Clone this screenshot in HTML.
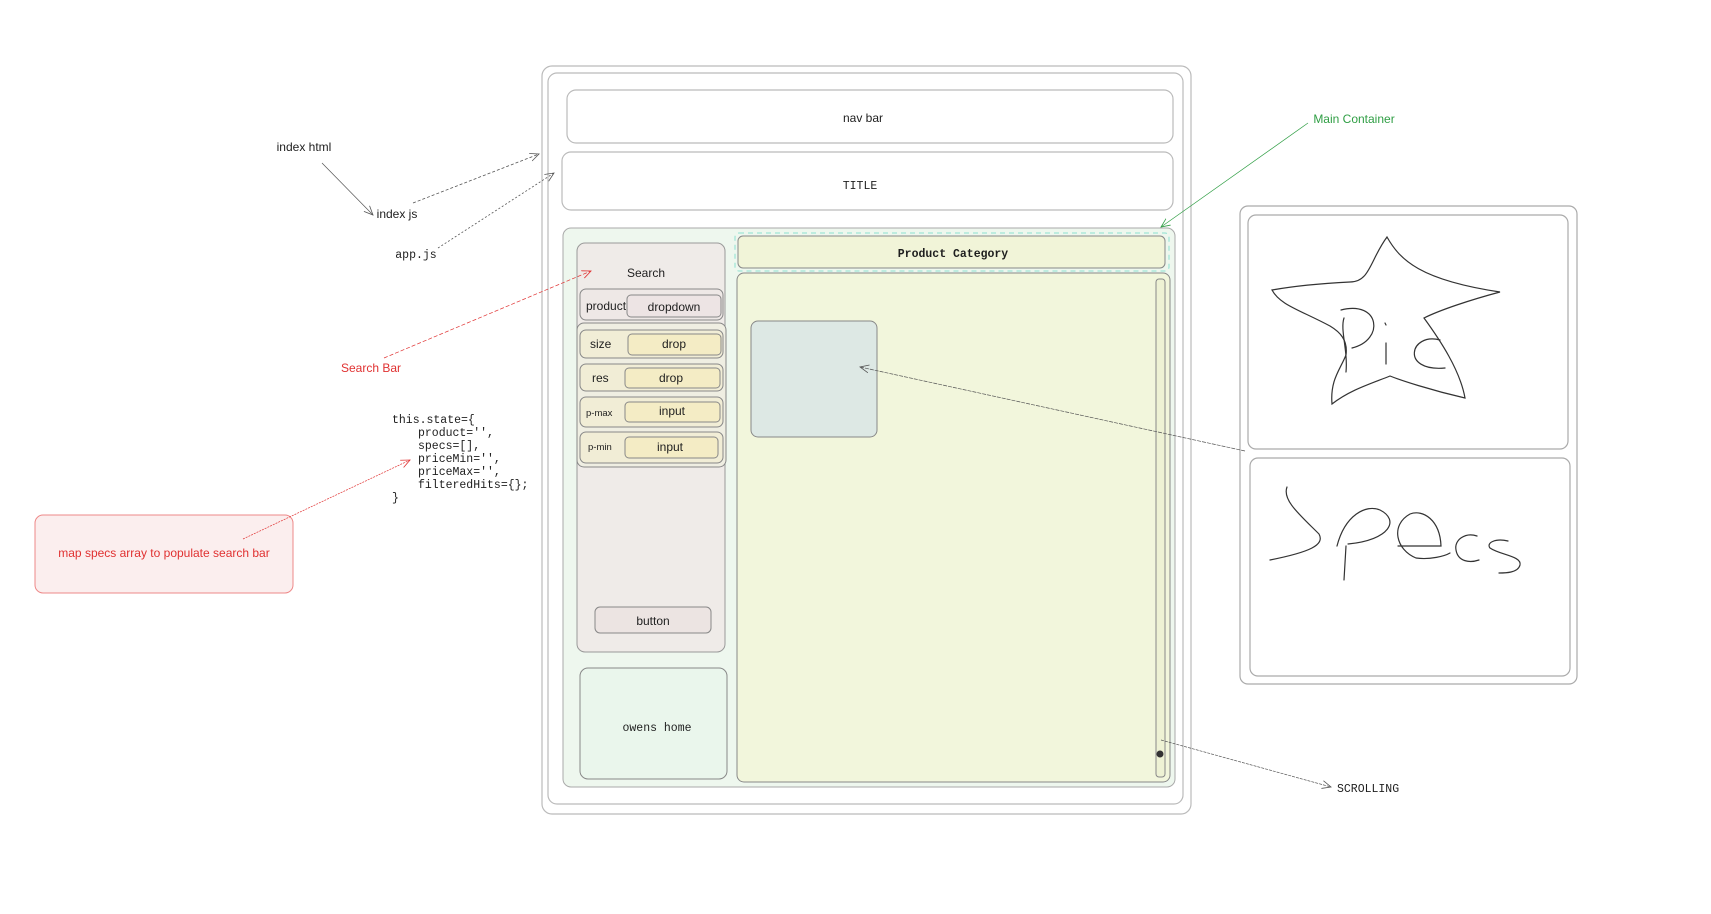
<!DOCTYPE html>
<html><head><meta charset="utf-8"><style>
html,body{margin:0;padding:0;background:#fff;width:1711px;height:914px;overflow:hidden}
svg{display:block}
.h{font-family:"Liberation Sans",sans-serif;font-size:12px;fill:#1e1e1e}
.m{font-family:"Liberation Mono",monospace;font-size:11.5px;fill:#1e1e1e}
</style></head><body>
<svg width="1711" height="914" viewBox="0 0 1711 914" xmlns="http://www.w3.org/2000/svg">
<defs>
<marker id="ah" markerWidth="10" markerHeight="10" refX="9" refY="5" orient="auto" markerUnits="userSpaceOnUse"><path d="M0,1 L9,5 L0,9" fill="none" stroke="#555" stroke-width="0.8"/></marker>
<marker id="ar" markerWidth="10" markerHeight="10" refX="9" refY="5" orient="auto" markerUnits="userSpaceOnUse"><path d="M0,1 L9,5 L0,9" fill="none" stroke="#e03131" stroke-width="0.8"/></marker>
<marker id="ag" markerWidth="10" markerHeight="10" refX="9" refY="5" orient="auto" markerUnits="userSpaceOnUse"><path d="M0,1 L9,5 L0,9" fill="none" stroke="#2f9e44" stroke-width="0.8"/></marker>
</defs>
<g fill="none" stroke="#bbb" stroke-width="1.2">
<rect x="542" y="66" width="649" height="748" rx="10"/>
<rect x="548" y="73" width="635" height="731" rx="9"/>
<rect x="567" y="90" width="606" height="53" rx="9"/>
<rect x="562" y="152" width="611" height="58" rx="9"/>
</g>
<text class="h" x="863" y="122" text-anchor="middle" font-size="11">nav bar</text>
<text class="m" x="860" y="189" text-anchor="middle">TITLE</text>
<rect x="563" y="228" width="612" height="559" rx="8" fill="#eef7ee" stroke="#aaa" stroke-width="1"/>
<rect x="577" y="243" width="148" height="409" rx="8" fill="#efebe8" stroke="#999" stroke-width="1"/>
<text class="h" x="646" y="277" text-anchor="middle">Search</text>
<rect x="580" y="289" width="143" height="31" rx="6" fill="#eee8e6" stroke="#888"/>
<rect x="627" y="295" width="94" height="22" rx="4" fill="#ede4e4" stroke="#888"/>
<text class="h" x="586" y="310" font-size="11">product</text>
<text class="h" x="674" y="311" text-anchor="middle" font-size="11">dropdown</text>
<rect x="577" y="323" width="149" height="144" rx="7" fill="#efeee2" stroke="#888"/>
<g stroke="#888" stroke-width="1">
<rect x="580" y="330" width="143" height="28" rx="6" fill="#f1edd6"/>
<rect x="628" y="334" width="93" height="21" rx="4" fill="#f4ecc5"/>
<rect x="580" y="364" width="143" height="27" rx="6" fill="#f1edd6"/>
<rect x="625" y="368" width="95" height="20" rx="4" fill="#f4ecc5"/>
<rect x="580" y="397" width="143" height="30" rx="6" fill="#f1edd6"/>
<rect x="625" y="402" width="95" height="20" rx="4" fill="#f4ecc5"/>
<rect x="580" y="432" width="143" height="31" rx="6" fill="#f1edd6"/>
<rect x="625" y="437" width="93" height="21" rx="4" fill="#f4ecc5"/>
</g>
<g class="h" font-size="10.5">
<text x="590" y="348">size</text><text x="674" y="348" text-anchor="middle">drop</text>
<text x="592" y="382">res</text><text x="671" y="382" text-anchor="middle">drop</text>
<text x="586" y="416" font-size="9.5">p-max</text><text x="672" y="415" text-anchor="middle">input</text>
<text x="588" y="450" font-size="9.5">p-min</text><text x="670" y="451" text-anchor="middle">input</text>
</g>
<rect x="595" y="607" width="116" height="26" rx="5" fill="#ece4e2" stroke="#888"/>
<text class="h" x="653" y="625" text-anchor="middle" font-size="11">button</text>
<rect x="580" y="668" width="147" height="111" rx="8" fill="#eaf6ec" stroke="#888"/>
<text class="m" x="657" y="731" text-anchor="middle" font-size="11">owens home</text>
<rect x="735" y="233" width="434" height="38" rx="4" fill="none" stroke="#8ce0d0" stroke-dasharray="5 4"/>
<rect x="738" y="236" width="427" height="32" rx="5" fill="#f1f4d8" stroke="#888"/>
<text class="m" x="953" y="257" text-anchor="middle" font-size="11.5" font-weight="bold">Product Category</text>
<rect x="737" y="273" width="433" height="509" rx="7" fill="#f2f6dc" stroke="#888"/>
<rect x="1156" y="279" width="9" height="498" rx="3" fill="#eef2d4" stroke="#888"/>
<circle cx="1160" cy="754" r="3.5" fill="#333"/>
<rect x="751" y="321" width="126" height="116" rx="7" fill="#dde8e4" stroke="#888"/>
<g fill="none" stroke="#aaa" stroke-width="1.2">
<rect x="1240" y="206" width="337" height="478" rx="8"/>
<rect x="1248" y="215" width="320" height="234" rx="8"/>
<rect x="1250" y="458" width="320" height="218" rx="8"/>
</g>
<g fill="none" stroke="#333" stroke-width="1.2" stroke-linecap="round">
<path d="M1387,237 C1400,260 1420,280 1500,292 L1500,292 C1470,300 1440,310 1424,318 C1440,340 1460,370 1465,398 C1430,390 1400,380 1390,376 C1370,384 1350,390 1332,404 C1330,380 1340,370 1346,355 C1348,340 1340,332 1330,326 C1300,310 1280,305 1272,290 C1300,285 1330,283 1350,282 C1370,282 1370,260 1387,237Z"/>
<path d="M1344,318 C1340,330 1348,350 1346,372"/>
<path d="M1341,310 C1380,300 1385,340 1352,348"/>
<path d="M1385,323 L1386,325 M1386,343 L1386,364"/>
<path d="M1440,340 C1410,332 1400,372 1445,368"/>
<path d="M1287,487 C1282,500 1300,515 1319,534 C1325,545 1310,552 1270,560"/>
<path d="M1346,546 L1344,580 M1337,546 C1345,515 1366,504 1380,510 C1400,520 1390,540 1348,544"/>
<path d="M1398,546 L1441,546 C1440,520 1423,509 1410,514 C1390,525 1396,550 1416,558 C1430,560 1445,556 1450,553"/>
<path d="M1477,536 C1465,532 1454,540 1456,550 C1458,562 1470,563 1479,560"/>
<path d="M1508,541 C1495,538 1486,543 1490,548 C1500,555 1522,556 1520,565 C1518,573 1505,573 1499,573"/>
</g>
<text class="h" x="1354" y="123" text-anchor="middle" font-size="10.5" style="fill:#2f9e44">Main Container</text>
<path d="M1308,123 L1161,227" stroke="#2f9e44" stroke-width="0.7" fill="none" marker-end="url(#ag)"/>
<text class="m" x="1337" y="792" font-size="10.5">SCROLLING</text>
<path d="M1161,740 L1331,787" stroke="#555" stroke-width="0.7" fill="none" stroke-dasharray="3 1" marker-end="url(#ah)"/>
<path d="M1245,451 L860,367" stroke="#555" stroke-width="0.7" fill="none" stroke-dasharray="4 1" marker-end="url(#ah)"/>
<text class="h" x="304" y="151" text-anchor="middle" font-size="11">index html</text>
<path d="M322,163 L373,215" stroke="#555" stroke-width="0.7" fill="none" marker-end="url(#ah)"/>
<text class="h" x="397" y="218" text-anchor="middle" font-size="11">index js</text>
<path d="M413,203 L539,154" stroke="#555" stroke-width="0.8" fill="none" stroke-dasharray="3 2" marker-end="url(#ah)"/>
<text class="m" x="416" y="258" text-anchor="middle" font-size="11">app.js</text>
<path d="M438,248 L554,173" stroke="#555" stroke-width="0.8" fill="none" stroke-dasharray="2 2" marker-end="url(#ah)"/>
<text class="h" x="371" y="372" text-anchor="middle" font-size="11" style="fill:#e03131">Search Bar</text>
<path d="M384,358 L591,271" stroke="#e03131" stroke-width="0.7" fill="none" stroke-dasharray="4 2" marker-end="url(#ar)"/>
<g class="m">
<text x="392" y="423">this.state={</text>
<text x="418" y="436">product='',</text>
<text x="418" y="449">specs=[],</text>
<text x="418" y="462">priceMin='',</text>
<text x="418" y="475">priceMax='',</text>
<text x="418" y="488">filteredHits={};</text>
<text x="392" y="501">}</text>
</g>
<rect x="35" y="515" width="258" height="78" rx="8" fill="#fbeeee" stroke="#e88" stroke-width="1"/>
<text class="h" x="164" y="557" text-anchor="middle" font-size="10" style="fill:#e03131">map specs array to populate search bar</text>
<path d="M243,539 L410,460" stroke="#e03131" stroke-width="0.7" fill="none" stroke-dasharray="2 1" marker-end="url(#ar)"/>
</svg>
</body></html>
